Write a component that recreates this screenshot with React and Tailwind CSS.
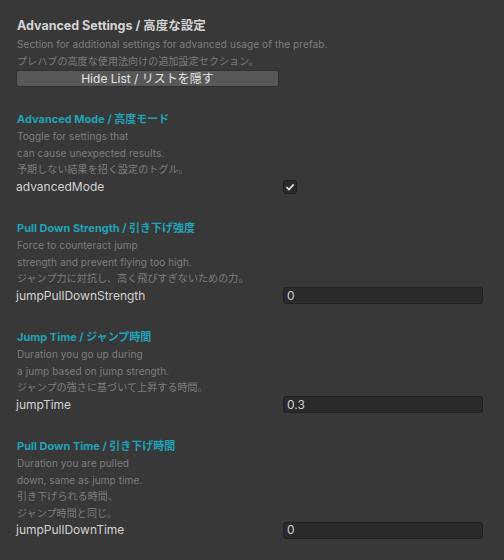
import React from 'react';

const font = { fontFamily: 'Inter, "Noto Sans CJK JP", sans-serif' };

const sections = [
  {
    title: 'Advanced Mode / 高度モード',
    lines: ['Toggle for settings that', 'can cause unexpected results.', '予期しない結果を招く設定のトグル。'],
    field: 'advancedMode',
    type: 'toggle',
  },
  {
    title: 'Pull Down Strength / 引き下げ強度',
    lines: ['Force to counteract jump', 'strength and prevent flying too high.', 'ジャンプ力に対抗し、高く飛びすぎないための力。'],
    field: 'jumpPullDownStrength',
    value: '0',
  },
  {
    title: 'Jump Time / ジャンプ時間',
    lines: ['Duration you go up during', 'a jump based on jump strength.', 'ジャンプの強さに基づいて上昇する時間。'],
    field: 'jumpTime',
    value: '0.3',
  },
  {
    title: 'Pull Down Time / 引き下げ時間',
    lines: ['Duration you are pulled', 'down, same as jump time.', '引き下げられる時間、', 'ジャンプ時間と同じ。'],
    field: 'jumpPullDownTime',
    value: '0',
  },
];

const Check = () => (
  <div className="w-[14px] h-[14px] rounded-[3px] bg-[#2a2a2a] border border-[#1e1e1e] flex items-center justify-center">
    <svg width="10" height="10" viewBox="0 0 10 10">
      <path d="M1.5 5.2 L4 7.5 L8.6 2.4" fill="none" stroke="#e8e8e8" strokeWidth="1.6" />
    </svg>
  </div>
);

const Section = ({ s }) => (
  <div className="flex flex-col">
    <div className="text-[11px] font-bold leading-[17px] text-[#1fa3b9]">{s.title}</div>
    {s.lines.map((l, i) => (
      <div key={i} className="text-[10px] leading-[16.5px] tracking-[0.1px] text-[#7e7e7e]">{l}</div>
    ))}
    <div className="flex items-center h-[18px]">
      <div className="w-[267px] text-[12px] text-[#d2d2d2] -ml-px">{s.field}</div>
      {s.type === 'toggle' ? (
        <Check />
      ) : (
        <div className="w-[200px] h-[17px] rounded-[3px] bg-[#2a2a2a] border border-[#212121] flex items-center px-[3px] text-[12px] text-[#d2d2d2]">
          {s.value}
        </div>
      )}
    </div>
  </div>
);

export default function App() {
  return (
    <div className="w-[504px] h-[560px] bg-[#383838] overflow-hidden pl-[17px] pt-[17px]" style={font}>
      <div className="text-[12.5px] font-bold leading-[18px] text-[#d4d4d4]">Advanced Settings / 高度な設定</div>
      <div className="text-[10px] leading-[17px] tracking-[0.1px] text-[#7e7e7e] mt-px">Section for additional settings for advanced usage of the prefab.</div>
      <div className="text-[10px] leading-[17px] tracking-[0.1px] text-[#7e7e7e]">プレハブの高度な使用法向けの追加設定セクション。</div>
      <div className="w-[263px] h-[17px] -ml-px rounded-[3px] bg-[#585858] border border-[#303030] flex items-center justify-center text-[12px] text-[#e4e4e4]">
        Hide List / リストを隠す
      </div>
      <div className="flex flex-col gap-[24.5px] mt-[24px]">
        {sections.map((s, i) => (
          <Section key={i} s={s} />
        ))}
      </div>
    </div>
  );
}
